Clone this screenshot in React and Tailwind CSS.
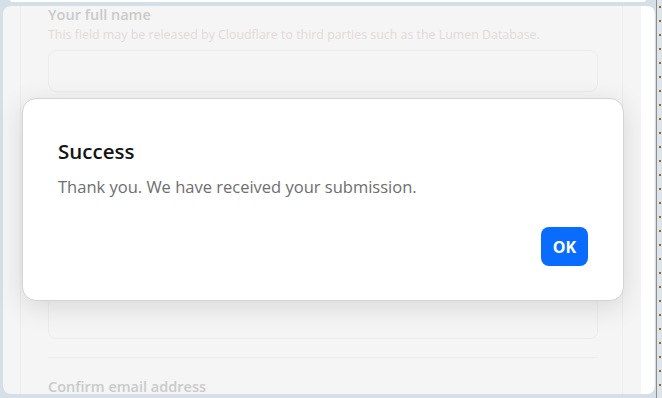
export default function App() {
  return (
    <div
      className="relative w-[662px] h-[398px] overflow-hidden bg-[#d5dfe7] flex"
      style={{ fontFamily: '"Open Sans", "Noto Sans", sans-serif' }}
    >
      {/* window column */}
      <div className="w-[656px] flex flex-col">
        <div className="h-[2px] mx-[10px] bg-white rounded-b" />
        <div className="h-[4px]" />
        <div className="ml-[3px] mr-[1px] flex-1 mb-[4px] rounded-[8px] bg-[#f5f5f5] overflow-hidden flex">
          <div className="w-[17px]" />
          <div className="w-[603px] border-x border-[#ececec] pl-[27px] pr-[24px] flex flex-col [&>*]:shrink-0">
            <p className="text-[14.5px] leading-[18px] font-semibold text-[#cacaca]">Your full name</p>
            <p className="text-[12.4px] leading-[16px] text-[#e2dada] mt-[3px]">
              This field may be released by Cloudflare to third parties such as the Lumen Database.
            </p>
            <div className="h-[42px] mt-[7px] rounded-[8px] border border-[#ececec]" />
            <div className="h-[42px] mt-[205px] rounded-[8px] border border-[#ececec]" />
            <div className="h-px bg-[#ececec] mt-[18px]" />
            <p className="text-[14.5px] leading-[18px] font-semibold text-[#cacaca] mt-[20px]">Confirm email address</p>
          </div>
          <div className="w-[18px]" />
          <div className="w-[13px] bg-white" />
        </div>
      </div>
      {/* dotted edge */}
      <div className="w-[6px] border-l border-[#8a8f93] bg-[#dfe4e8] bg-[radial-gradient(circle,#8b6b3e_1px,transparent_1.2px)] bg-[length:6px_14px]" />

      {/* success dialog */}
      <div className="absolute left-[22px] top-[98px] w-[602px] h-[203px] rounded-[14px] bg-white border border-[#d4d4d4] shadow-[0_6px_28px_rgba(0,0,0,0.12)] pl-[35px] pr-[35px] pt-[36px] flex flex-col">
        <h2 className="text-[20.5px] leading-[32px] font-semibold text-[#151515]">Success</h2>
        <p className="text-[16.5px] leading-[24px] text-[#6e6e6e] mt-[8px]">Thank you. We have received your submission.</p>
        <div className="flex justify-end mt-[28px]">
          <button className="w-[47px] h-[39px] rounded-[8px] bg-[#0a6cff] text-white text-[16px] font-bold">OK</button>
        </div>
      </div>
    </div>
  );
}
